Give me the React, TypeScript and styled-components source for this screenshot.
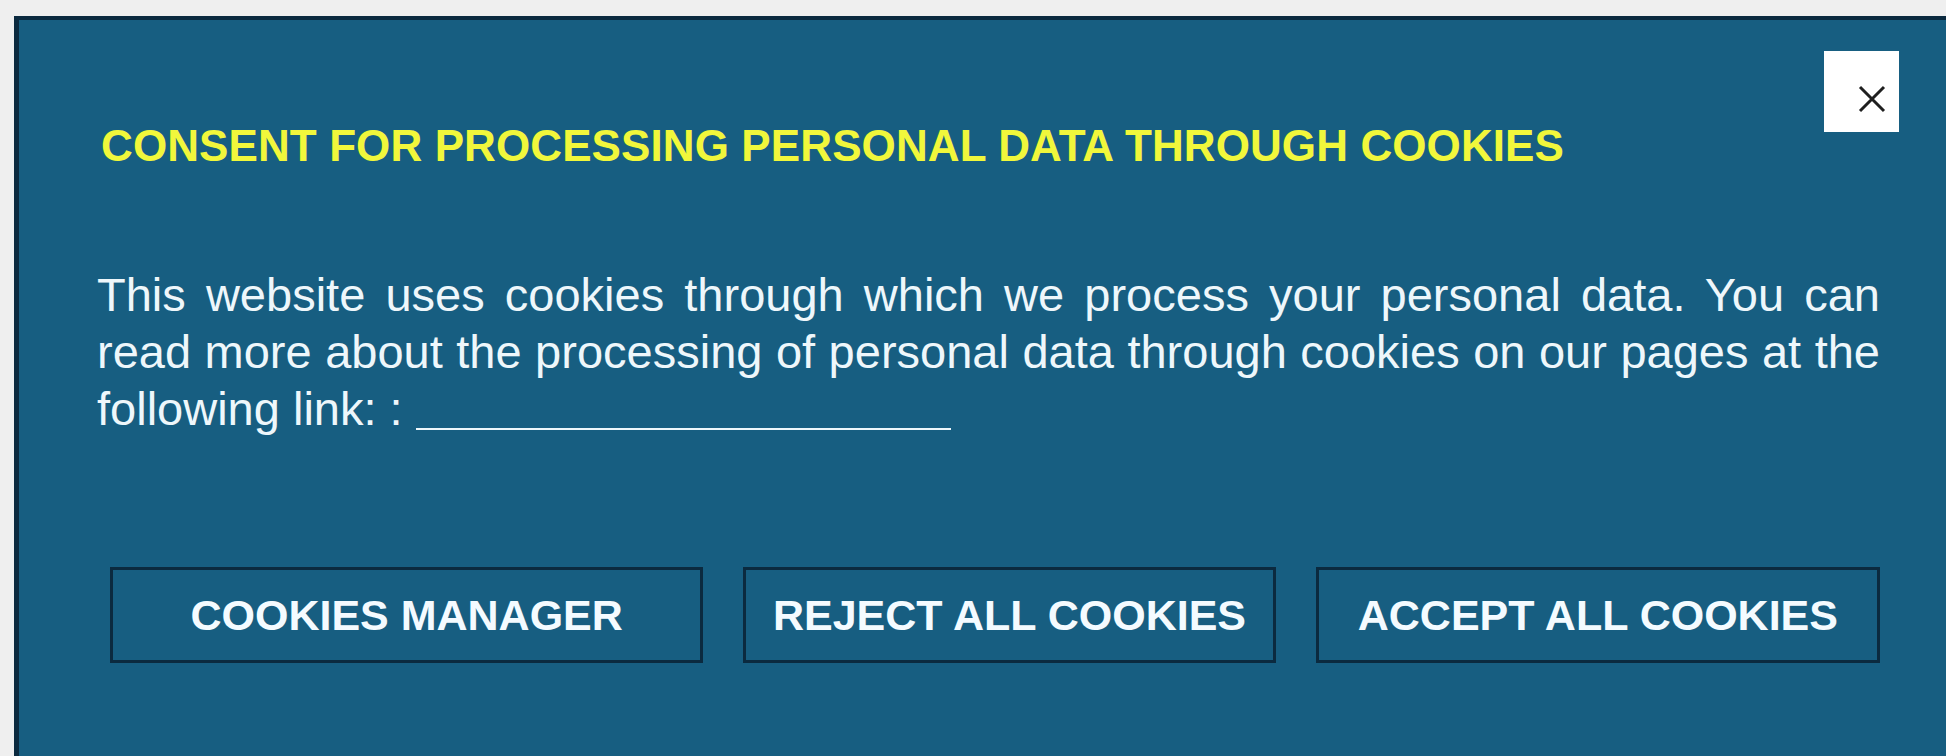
import styled, { createGlobalStyle } from "styled-components";

const GlobalStyle = createGlobalStyle`
  html, body {
    margin: 0;
    padding: 0;
    overflow: hidden;
    background: #efefef;
  }
  body {
    font-family: "Liberation Sans", Arial, sans-serif;
  }
`;

const Page = styled.div`
  height: 756px;
  padding: 16px 0 0 14px;
  box-sizing: border-box;
`;

const Panel = styled.section`
  position: relative;
  height: 800px;
  box-sizing: border-box;
  background: #175e81;
  border: 5px solid #0b2a3f;
  border-top-width: 4px;
  padding: 101px 0 0 78px;
  width: calc(100% + 40px);
`;

const Content = styled.div`
  width: 1783px;
  display: flex;
  flex-direction: column;
`;

const Title = styled.h2`
  margin: 0 0 0 4px;
  font-size: 44px;
  line-height: 50px;
  font-weight: 700;
  color: #f1f73b;
  letter-spacing: 0.1px;
`;

const Text = styled.p`
  margin: 95px 0 0;
  font-size: 47px;
  line-height: 57px;
  color: #eef7fb;
`;

const Line = styled.span<{ $justify?: boolean }>`
  display: block;
  text-align: ${({ $justify }) => ($justify ? "justify" : "left")};
  text-align-last: ${({ $justify }) => ($justify ? "justify" : "left")};
`;

const Blank = styled.a`
  display: inline-block;
  width: 535px;
  border-bottom: 2px solid #eef7fb;
  vertical-align: -5px;
`;

const Actions = styled.div`
  display: flex;
  gap: 40px;
  margin: 130px 0 0 13px;
`;

const Button = styled.button<{ $width: number; $gap?: number }>`
  width: ${({ $width }) => $width}px;
  height: 96px;
  box-sizing: border-box;
  background: transparent;
  border: 3px solid #0b2a3f;
  color: #f4fbff;
  font-family: "Liberation Sans", Arial, sans-serif;
  font-weight: 700;
  font-size: 43px;
  padding: 0;
  cursor: pointer;
`;

const Close = styled.button`
  position: absolute;
  top: 31px;
  right: 82px;
  width: 75px;
  height: 81px;
  background: #ffffff;
  border: none;
  padding: 0;
  cursor: pointer;
  svg {
    position: absolute;
    left: 34px;
    top: 34px;
  }
`;

export default function App() {
  return (
    <>
      <GlobalStyle />
      <Page>
        <Panel>
          <Close aria-label="Close">
            <svg width="28" height="28" viewBox="0 0 28 28">
              <path
                d="M2 2 L26 26 M26 2 L2 26"
                stroke="#1f1f1f"
                strokeWidth="3"
                fill="none"
              />
            </svg>
          </Close>
          <Content>
            <Title>CONSENT FOR PROCESSING PERSONAL DATA THROUGH COOKIES</Title>
            <Text>
              <Line $justify>
                This website uses cookies through which we process your personal data. You can
              </Line>
              <Line $justify>
                read more about the processing of personal data through cookies on our pages at the
              </Line>
              <Line>
                following link: : <Blank />
              </Line>
            </Text>
            <Actions>
              <Button $width={594}>COOKIES MANAGER</Button>
              <Button $width={533}>REJECT ALL COOKIES</Button>
              <Button $width={565}>ACCEPT ALL COOKIES</Button>
            </Actions>
          </Content>
        </Panel>
      </Page>
    </>
  );
}
